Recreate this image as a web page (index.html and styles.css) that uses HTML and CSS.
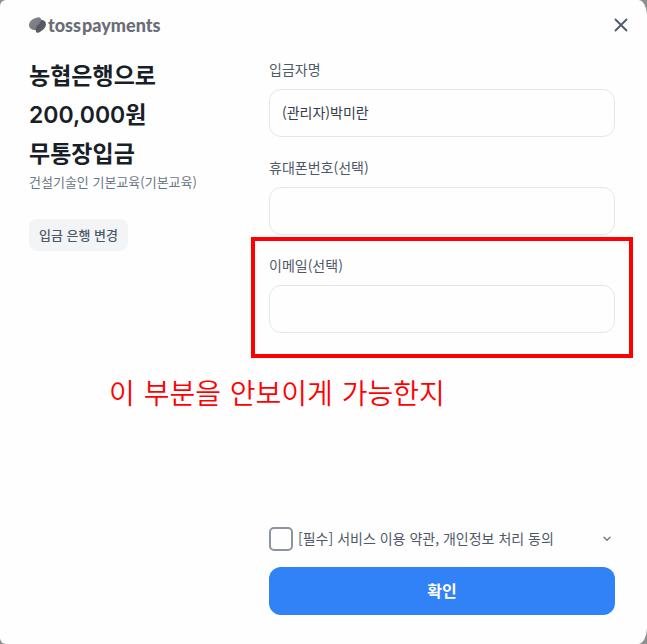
FILE: index.html
```
<!DOCTYPE html>
<html lang="ko">
<head>
    <meta charset="UTF-8">
    <meta name="viewport" content="width=device-width, initial-scale=1.0">
    <title>toss payments</title>
    <link rel="stylesheet" href="styles.css">
</head>
<body>
    <div class="modal">
        <header class="header">
            <div class="logo">
                <svg class="logo-icon" viewBox="0 0 18 16" width="18" height="16">
                    <defs>
                        <linearGradient id="logoLeft" x1="0" y1="0" x2="1" y2="1">
                            <stop offset="0" stop-color="#85898e"/>
                            <stop offset="1" stop-color="#72767b"/>
                        </linearGradient>
                        <linearGradient id="logoRight" x1="0" y1="0" x2="1" y2="1">
                            <stop offset="0" stop-color="#4c5056"/>
                            <stop offset="1" stop-color="#62666c"/>
                        </linearGradient>
                    </defs>
                    <path fill="url(#logoLeft)" d="M9.500 0.200C6.500 0.500 3.500 1.800 1.800 3.800C0.600 5.200 0 6.700 0 8.300C0 10.900 2.300 13 6.800 13.300C9.500 12 11.300 10 12 7.500C12.500 6 12.600 4.200 12.300 2.700C12 1.200 11 0.100 9.500 0.200Z"/>
                    <path fill="url(#logoRight)" d="M12.300 2.700C15.300 3 17 4.800 17 7.300C17 10 15 12.500 12 14.200C10.200 15.300 9 15.900 8.100 15.800C7.200 15.700 6.900 14.800 6.800 13.300C6.700 11.500 7.400 9.500 8.800 8.200C10.800 6.500 12.100 5 12.300 2.700Z"/>
                </svg>
                <div class="logo-text"><span>toss</span> <span>payments</span></div>
            </div>
            <button type="button" class="close-button" aria-label="닫기">
                <svg viewBox="0 0 14 14" width="14" height="14">
                    <path d="M1.500 1.500L12.500 12.500M12.500 1.500L1.500 12.500" stroke="#4e5968" stroke-width="1.800" stroke-linecap="round"/>
                </svg>
            </button>
        </header>

        <main class="content">
            <section class="summary">
                <h1>농협은행으로<br>200,000원<br>무통장입금</h1>
                <p class="product">건설기술인 기본교육(기본교육)</p>
                <button type="button" class="bank-button">입금 은행 변경</button>
            </section>

            <form class="payment-form">
                <div class="field">
                    <label for="depositor">입금자명</label>
                    <input type="text" id="depositor" name="depositor" value="(관리자)박미란">
                </div>
                <div class="field">
                    <label for="phone">휴대폰번호(선택)</label>
                    <input type="text" id="phone" name="phone">
                </div>
                <div class="field">
                    <label for="email">이메일(선택)</label>
                    <input type="text" id="email" name="email">
                    <div class="mark-box"></div>
                    <div class="mark-text">이 부분을 안보이게 가능한지</div>
                </div>

                <div class="form-bottom">
                    <div class="agreement">
                        <input type="checkbox" id="agree" name="agree">
                        <label for="agree">[필수] 서비스 이용 약관, 개인정보 처리 동의</label>
                        <button type="button" class="toggle-button" aria-label="펼치기">
                            <svg viewBox="0 0 8 6" width="8" height="6">
                                <path d="M1 1.200L4 4.200L7 1.200" fill="none" stroke="#6b7684" stroke-width="1.300" stroke-linecap="round" stroke-linejoin="round"/>
                            </svg>
                        </button>
                    </div>
                    <button type="submit" class="confirm-button">확인</button>
                </div>
            </form>
        </main>
    </div>
</body>
</html>
```
FILE: styles.css
```
* {
    box-sizing: border-box;
}
body {
    margin: 0;
    background-color: #8f8f8f;
    font-family: "Noto Sans CJK KR", sans-serif;
    color: #4e5968;
}
button,
input {
    font-family: inherit;
}
button {
    padding: 0;
    border: none;
    background: none;
    cursor: pointer;
}
svg {
    display: block;
}
.modal {
    display: flex;
    flex-direction: column;
    min-height: 100vh;
    padding: 14px 32px 29px 29px;
    background-color: #fefefe;
    border-radius: 6px 9px 9px 6px / 6px 15px 16px 6px;
}
.header {
    display: flex;
    justify-content: space-between;
    align-items: center;
    height: 22px;
    margin-bottom: 23px;
}
.logo {
    display: flex;
    align-items: center;
    gap: 1px;
}
.logo-text {
    display: flex;
    gap: 1px;
    font-family: Lato, sans-serif;
    font-size: 18px;
    line-height: 22px;
    font-weight: 900;
    color: #6b6d76;
}
.close-button {
    display: flex;
    align-items: center;
    justify-content: center;
    width: 24px;
    height: 24px;
    margin-right: -18px;
}
.content {
    flex: 1;
    display: grid;
    grid-template-columns: 240px 1fr;
}
h1 {
    margin: -2px 0 0;
    font-family: Inter, "Noto Sans CJK KR", sans-serif;
    font-size: 23px;
    line-height: 39px;
    font-weight: 600;
    color: #191f28;
}
.product {
    margin: -2px 0 27px;
    font-size: 13px;
    line-height: 20px;
    color: #6b7684;
}
.bank-button {
    height: 32px;
    padding: 0 10px 2px;
    border-radius: 8px;
    background-color: #f2f4f6;
    font-size: 13px;
    font-weight: 500;
    color: #4e5968;
}
.payment-form {
    display: flex;
    flex-direction: column;
    gap: 20px;
}
.field {
    position: relative;
}
.field label {
    display: block;
    margin-bottom: 10px;
    font-size: 14px;
    line-height: 20px;
}
.field input {
    display: block;
    width: 100%;
    height: 48px;
    padding: 0 12px 2px;
    border: 1px solid #e5e6e9;
    border-radius: 12px;
    background-color: #fefefe;
    font-size: 14px;
    color: #333d4b;
}
/* red review mark around the email field */
.mark-box {
    position: absolute;
    top: -18px;
    left: -18px;
    right: -18px;
    bottom: -25px;
    border: 4px solid #ff0000;
}
.mark-text {
    position: absolute;
    top: 120px;
    left: -160px;
    font-family: "DejaVu Sans", "Noto Sans CJK KR", sans-serif;
    font-size: 28px;
    font-weight: 350;
    line-height: 40px;
    white-space: nowrap;
    color: #ff0000;
}
.form-bottom {
    margin-top: auto;
}
.agreement {
    display: flex;
    align-items: center;
    gap: 5px;
    margin-bottom: 16px;
}
.agreement input {
    appearance: none;
    width: 24px;
    height: 24px;
    margin: 0;
    border: 2px solid #8b95a1;
    border-radius: 5px;
}
.agreement label {
    padding-bottom: 2px;
    font-size: 14px;
    line-height: 20px;
}
.toggle-button {
    display: flex;
    align-items: center;
    justify-content: center;
    width: 16px;
    height: 16px;
    margin-left: auto;
}
.confirm-button {
    width: 100%;
    height: 48px;
    padding-bottom: 2px;
    border-radius: 12px;
    background-color: #3182f6;
    font-size: 16px;
    font-weight: 600;
    color: #ffffff;
}
```
